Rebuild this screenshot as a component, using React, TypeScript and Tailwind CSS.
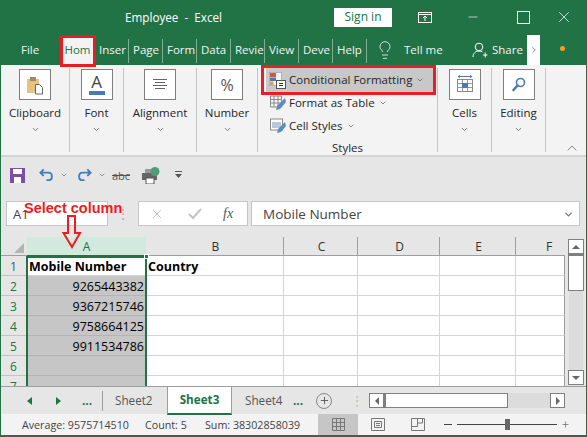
import { ChevronDown, ChevronUp, ChevronRight, Lightbulb, Minus, Plus, X } from "lucide-react";

const font = "font-['Open_Sans','Noto_Sans',sans-serif]";

const tabs = ["Inser", "Page", "Form", "Data", "Revie", "View", "Deve", "Help"];

function TitleBar() {
  return (
    <div className="h-[36px] bg-[#217346] flex items-center text-white shrink-0">
      <span className="ml-[125px] w-[209px] text-[11.700px] whitespace-pre">Employee  -  Excel</span>
      <span className="w-[58px] h-[19px] -mt-[2px] bg-white text-[#217346] text-[12px] flex items-center justify-center">Sign in</span>
      <svg className="ml-[26px] -mt-[2px]" width="14" height="11" viewBox="0 0 14 11" fill="none" stroke="white">
        <rect x="0.5" y="0.5" width="13" height="10" />
        <path d="M0 2.500h14M7 9V4M5 6l2-2 2 2" />
      </svg>
      <Minus className="ml-[34px] -mt-[2px] text-white" size={14} strokeWidth={1.1} />
      <span className="ml-[37px] -mt-[2px] w-[13px] h-[13px] border border-white" />
      <X className="ml-[25px] -mt-[2px]" size={18} strokeWidth={1} />
    </div>
  );
}

function TabRow() {
  return (
    <div className="h-[29px] bg-[#217346] flex items-center text-[#f3f3f3] text-[11.500px] shrink-0 relative">
      <span className="ml-[21px] w-[40px] -mt-[2px]">File</span>
      <span className="w-[33px] h-[29px] bg-[#f3f3f3] text-[#217346] flex items-center justify-center overflow-hidden pb-[2px]">Hom</span>
      <span className="w-[1px]" />
      {tabs.map((t) => (
        <span key={t} className="w-[34px] h-[24px] pl-[4px] pb-[2px] border-r border-[#7fae95] flex items-center overflow-hidden whitespace-nowrap">
          {t}
        </span>
      ))}
      <Lightbulb className="ml-[8px] -mt-[2px]" size={20} strokeWidth={1} />
      <span className="ml-[9px] w-[68px] -mt-[2px]">Tell me</span>
      <svg className="-mt-[2px]" width="16" height="16" viewBox="0 0 16 16" fill="none" stroke="white" strokeWidth="1">
        <circle cx="7" cy="5" r="3.800" />
        <path d="M1 15c0-3.500 2.500-6 6-6 1.500 0 2.500 .4 3.500 1M11 13h4.500M13.200 10.500v5" />
      </svg>
      <span className="ml-[4px] w-[35px] -mt-[2px]">Share</span>
      <span className="w-[13px] h-[30px] -mt-[1px] bg-white flex items-center justify-center">
        <ChevronRight className="text-[#777]" size={10} />
      </span>
      <span className="ml-[20px] -mt-[4px] w-[5px] h-[5px] rounded-full bg-[#f7a01e]" />
    </div>
  );
}

function BigGroup({ label, width, icon }: { label: string; width: string; icon: React.ReactNode }) {
  return (
    <div className={`${width} h-[84px] mt-[3px] border-r border-[#c4c4c4] flex flex-col items-center shrink-0`}>
      <div className="w-[32px] h-[31px] border border-[#7f7f7f] bg-white flex items-center justify-center mt-[1px]">{icon}</div>
      <span className="mt-[4px] text-[11.500px] text-[#262626] leading-[17px]">{label}</span>
      <ChevronDown className="mt-[4px] text-[#555]" size={9} strokeWidth={2} />
    </div>
  );
}

function StyleRow({ label, icon, active }: { label: string; icon: React.ReactNode; active?: boolean }) {
  return (
    <div className={`flex items-center gap-[2px] pl-[3px] text-[11.500px] text-[#262626] whitespace-nowrap shrink-0 ${active ? "h-[24px] -mb-[1px] bg-[#c8c8c8] w-[167px]" : "h-[23px] pl-[4px]"}`}>
      {icon}
      <span className="ml-[1px]">{label}</span>
      <ChevronDown className="ml-[2px] text-[#555]" size={8} strokeWidth={2} />
    </div>
  );
}

function Ribbon() {
  return (
    <div className="h-[92px] bg-[#f3f3f3] border-b-2 border-[#d4d4d4] flex pl-[1px] shrink-0 relative">
      <BigGroup
        label="Clipboard"
        width="w-[69px]"
        icon={
          <svg width="18" height="20" viewBox="0 0 18 20">
            <rect x="1" y="4" width="12" height="14" fill="#e8c27e" />
            <rect x="4" y="2" width="6" height="4" fill="#9a8a70" />
            <path d="M9.500 9.500h4l3 3v6.500h-7z" fill="white" stroke="#666" />
          </svg>
        }
      />
      <BigGroup
        label="Font"
        width="w-[54px]"
        icon={
          <div className="flex flex-col items-center">
            <span className="text-[#444] text-[17px] font-medium leading-[16px]">A</span>
            <span className="w-[16px] h-[4px] mt-[1px] bg-[#4a7cb3]" />
          </div>
        }
      />
      <BigGroup
        label="Alignment"
        width="w-[73px]"
        icon={
          <svg width="14" height="11" viewBox="0 0 14 11" stroke="#666">
            <path d="M0 .5h14M2 3.500h10M0 6.500h14M2 9.500h10" />
          </svg>
        }
      />
      <BigGroup label="Number" width="w-[61px]" icon={<span className="text-[#555] text-[16px] leading-none">%</span>} />

      <div className="w-[180px] h-[84px] mt-[3px] border-r border-[#c4c4c4] flex flex-col pl-[8px] shrink-0">
        <StyleRow
          active
          label="Conditional Formatting"
          icon={
            <svg width="17" height="17" viewBox="0 0 17 17">
              <rect x=".5" y=".5" width="12" height="13" fill="#f4f4f4" stroke="#888" strokeWidth=".5" />
              <rect x="1" y="1" width="6" height="4" fill="#d8563c" />
              <rect x="1" y="5.500" width="6" height="3.500" fill="#4a7cb3" />
              <rect x="1" y="9.500" width="3.500" height="3.500" fill="#e69a52" />
              <rect x="7.500" y="8.500" width="9" height="8" fill="white" stroke="#555" />
              <path d="M10 11.500h4M10 13.500h4" stroke="#333" />
            </svg>
          }
        />
        <StyleRow
          label="Format as Table"
          icon={
            <svg width="16" height="16" viewBox="0 0 16 16" fill="none">
              <path d="M.5 1h11v11h-11zM.5 4.500h11M.5 8h11M4 1v11M8 1v11" stroke="#8a8a8a" />
              <path d="M15 3l-8 8-1 4 4-1 6-7z" fill="#5b8cc0" />
            </svg>
          }
        />
        <StyleRow
          label="Cell Styles"
          icon={
            <svg width="16" height="16" viewBox="0 0 16 16">
              <rect x=".5" y="1" width="12" height="11" fill="white" stroke="#888" />
              <rect x="2" y="4" width="9" height="6" fill="#b9c7d8" />
              <path d="M15 4l-7 7-1 4 4-1 5-6z" fill="#5b8cc0" />
            </svg>
          }
        />
        <span className="text-[11.500px] text-[#262626] text-center leading-[16px] pr-[8px] mt-[3px] shrink-0">Styles</span>
      </div>

      <BigGroup
        label="Cells"
        width="w-[54px]"
        icon={
          <svg width="16" height="19" viewBox="0 0 16 19" fill="none">
            <path d="M1 1.500h14M3 .5L1 1.500l2 1M13 .5l2 1-2 1" stroke="#4a7cb3" />
            <rect x=".5" y="4.500" width="15" height="12" stroke="#888" fill="white" />
            <path d="M.5 8.500h15M.5 12.500h15M5.500 4.500v12M10.500 4.500v12" stroke="#999" />
            <rect x="5" y="8" width="6" height="5" fill="#4a7cb3" />
          </svg>
        }
      />
      <BigGroup
        label="Editing"
        width="w-[54px]"
        icon={
          <svg width="14" height="15" viewBox="0 0 14 15" fill="none" stroke="#4a7cb3">
            <circle cx="8.500" cy="5.500" r="4" strokeWidth="1.600" />
            <path d="M5.500 8.500L1.500 13" strokeWidth="2.600" strokeLinecap="round" />
          </svg>
        }
      />
      <ChevronUp className="absolute left-[564px] -bottom-[1px] text-[#555]" size={16} strokeWidth={1} />
    </div>
  );
}

function QuickAccess() {
  return (
    <div className="h-[40px] bg-[#e6e6e6] flex items-center pl-[10px] pb-[4px] shrink-0 text-[#666]">
      <svg width="15" height="15" viewBox="0 0 15 15">
        <rect width="15" height="15" fill="#7b4fa3" />
        <rect x="3" y="1" width="9" height="5" fill="white" />
        <rect x="4" y="9" width="7" height="6" fill="white" />
      </svg>
      <svg className="ml-[14px]" width="15" height="14" viewBox="0 0 16 14" fill="none" stroke="#3f7fbd" strokeWidth="2">
        <path d="M5 1L1.500 4.500 5 8M2 4.500h8c5 0 5 8 0 8H8" />
      </svg>
      <ChevronDown className="ml-[6px]" size={8} strokeWidth={2} />
      <svg className="ml-[9px]" width="15" height="14" viewBox="0 0 16 14" fill="none" stroke="#3f7fbd" strokeWidth="2">
        <path d="M11 1l3.500 3.500L11 8M14 4.500H6c-5 0-5 8 0 8h2" />
      </svg>
      <ChevronDown className="ml-[6px]" size={8} strokeWidth={2} />
      <span className="ml-[6px] text-[11px] text-[#555] line-through leading-none">abc</span>
      <svg className="ml-[12px]" width="18" height="17" viewBox="0 0 18 17">
        <rect x="0" y="6" width="15" height="7" fill="#666" />
        <rect x="3" y="2" width="8" height="4" fill="#999" />
        <rect x="4" y="11" width="8" height="6" fill="white" stroke="#555" />
        <circle cx="13" cy="4.500" r="4.500" fill="#4f9d7c" />
      </svg>
      <svg className="ml-[15px]" width="7" height="8" viewBox="0 0 7 8" fill="#555">
        <path d="M0 0h7v1H0zM0 3h7L3.500 7z" />
      </svg>
    </div>
  );
}

function FormulaRow() {
  return (
    <div className="h-[40px] bg-[#e6e6e6] flex pl-[6px] pt-[4px] shrink-0">
      <div className="w-[102px] h-[25px] bg-white border border-[#c6c6c6] pl-[6px] text-[13px] text-[#444] leading-[25px]">A1</div>
      <span className="w-[30px] text-[#aaa] text-center text-[12px] leading-[26px]">⋮</span>
      <div className="w-[110px] h-[25px] bg-white border border-[#c6c6c6] flex items-center text-[#b5b5b5]">
        <X className="ml-[11px]" size={14} strokeWidth={1.500} />
        <svg className="ml-[24px]" width="14" height="12" viewBox="0 0 14 12" fill="none" stroke="#c4c4c4" strokeWidth="2">
          <path d="M1 6l4 4 8-9" />
        </svg>
        <span className="ml-[21px] text-[#555] text-[14px] italic font-['Liberation_Serif',serif]">fx</span>
      </div>
      <div className="ml-[3px] w-[329px] h-[25px] bg-white border border-[#c6c6c6] flex items-center justify-between pl-[11px] pr-[5px] pt-[1px] text-[13.500px] text-[#444]">
        <span>Mobile Number</span>
        <ChevronDown className="text-[#777]" size={11} strokeWidth={3} />
      </div>
    </div>
  );
}

const rows = [
  ["Mobile Number", "Country"],
  ["9265443382", ""],
  ["9367215746", ""],
  ["9758664125", ""],
  ["9911534786", ""],
  ["", ""],
  ["", ""],
];

const colHead = "border-r border-[#9e9e9e] text-center text-[12px] text-[#333] h-[19px] leading-[20px] pl-[2px]";
const cell = "h-[20px] border-r border-b border-[#d4d4d4]";

function Sheet() {
  return (
    <div className="h-[149px] bg-[#e6e6e6] flex relative overflow-hidden shrink-0">
      <div className="w-[565px] shrink-0">
        <div className={`grid grid-cols-[27px_119px_138px_74px_82px_76px_49px] ${font}`}>
          <div className="h-[19px] border-b border-[#9e9e9e] relative">
            <span className="absolute right-[3px] bottom-[2px] border-l-[10px] border-b-[10px] border-l-transparent border-b-[#b4b4b4]" />
          </div>
          <div className="bg-[#d2eadd] text-[#217346] text-center text-[12px] h-[19px] leading-[20px] border-b border-[#217346]">A</div>
          {["B", "C", "D", "E"].map((c) => (
            <div key={c} className={`${colHead} border-b border-b-[#9e9e9e]`}>{c}</div>
          ))}
          <div className="text-center text-[12px] text-[#333] h-[19px] leading-[20px] pl-[17px] border-b border-[#9e9e9e]">F</div>
          {rows.map((r, i) => (
            <div key={i} className="contents">
              <div className="h-[20px] bg-[#e6e6e6] border-b border-[#c4c4c4] text-center text-[12px] leading-[22px] text-[#217346]">{i + 1}</div>
              <div className={`h-[20px] border-b text-[12.500px] leading-[21px] text-black px-[2px] ${i === 0 ? "bg-white font-bold border-[#d4d4d4]" : "bg-[#c6c6c6] text-right border-[#b4b4b4]"}`}>
                {r[0]}
              </div>
              <div className={`${cell} bg-white text-[12.500px] leading-[21px] text-black font-bold px-[2px]`}>{r[1]}</div>
              <div className={`${cell} bg-white`} />
              <div className={`${cell} bg-white`} />
              <div className={`${cell} bg-white`} />
              <div className="h-[20px] border-b border-r border-b-[#d4d4d4] border-r-[#9e9e9e] bg-white" />
            </div>
          ))}
        </div>
      </div>
      <div className="ml-[3px] w-[16px] flex flex-col">
        <div className="mt-[2px] h-[15px] bg-white border border-[#7f7f7f] flex items-center justify-center">
          <span className="border-x-[4px] border-b-[4px] border-x-transparent border-b-[#666]" />
        </div>
        <div className="h-[37px] bg-white border border-[#7f7f7f] border-t-2" />
        <div className="flex-1 bg-[#dcdcdc] w-[14px] mx-[1px]" />
        <div className="h-[15px] mb-[1px] bg-white border border-[#7f7f7f] flex items-center justify-center">
          <span className="border-x-[4px] border-t-[4px] border-x-transparent border-t-[#666]" />
        </div>
      </div>
      {/* selection box */}
      <div className="absolute left-[26px] top-[19px] w-[121px] h-[140px] border-2 border-[#217346]" />
      <span className="absolute left-[144px] top-[17px] w-[5px] h-[5px] bg-[#217346] border border-white" />
    </div>
  );
}

function Tabbar() {
  return (
    <div className="h-[28px] bg-[#e6e6e6] border-t border-[#9e9e9e] flex items-center shrink-0 relative text-[11.700px] text-[#555]">
      <span className="ml-[27px] border-y-[4px] border-r-[5px] border-y-transparent border-r-[#217346]" />
      <span className="ml-[24px] border-y-[4px] border-l-[5px] border-y-transparent border-l-[#217346]" />
      <span className="ml-[21px] w-[20px] text-[#217346] font-bold">...</span>
      <span className="h-[20px] border-l border-[#9e9e9e]" />
      <span className="ml-[12px] w-[52px]">Sheet2</span>
      <span className="w-[65px] h-[28px] -mb-[2px] -mt-[1px] bg-white border-b-2 border-[#217346] border-x border-x-[#9e9e9e] text-[#217346] font-bold flex items-center justify-center">Sheet3</span>
      <span className="ml-[13px] w-[48px] whitespace-nowrap">Sheet4</span>
      <span className="w-[20px] text-[#217346] font-bold">...</span>
      <span className="ml-[3px] w-[16px] h-[16px] rounded-full border border-[#888] flex items-center justify-center">
        <Plus size={11} strokeWidth={2} />
      </span>
      <span className="ml-[19px] w-[8px] text-[#bbb]">⋮</span>
      <div className="ml-[10px] w-[196px] h-[15px] flex bg-[#dcdcdc]">
        <span className="w-[15px] bg-white border border-[#7f7f7f] flex items-center justify-center">
          <span className="border-y-[4px] border-r-[4px] border-y-transparent border-r-[#666]" />
        </span>
        <span className="w-[124px] bg-white border border-[#7f7f7f] border-l-2" />
        <span className="ml-auto w-[15px] bg-white border border-[#7f7f7f] flex items-center justify-center">
          <span className="border-y-[4px] border-l-[4px] border-y-transparent border-l-[#666]" />
        </span>
      </div>
    </div>
  );
}

function StatusBar() {
  return (
    <div className="h-[21px] bg-[#f3f3f3] flex items-center text-[10.700px] text-[#444] shrink-0">
      <span className="ml-[22px] w-[123px] whitespace-nowrap pt-[2px]">Average: 9575714510</span>
      <span className="w-[60px] whitespace-nowrap pt-[2px]">Count: 5</span>
      <span className="w-[111px] whitespace-nowrap pt-[2px]">Sum: 38302858039</span>
      <span className="ml-[2px] w-[40px] h-[21px] bg-[#c6c6c6] flex items-center justify-center">
        <svg width="13" height="13" viewBox="0 0 13 13" fill="none" stroke="#777">
          <path d="M.5.5h12v12H.5zM.5 4.500h12M.5 8.500h12M4.500.5v12M8.500.5v12" />
        </svg>
      </span>
      <svg className="ml-[13px]" width="14" height="13" viewBox="0 0 14 13" fill="none" stroke="#777">
        <path d="M.5.5h13v12H.5zM3.500 3.500h7v6h-7zM5 5.500h4M5 7.500h4" />
      </svg>
      <svg className="ml-[26px]" width="14" height="13" viewBox="0 0 14 13" fill="none" stroke="#777">
        <path d="M.5.5h13v12H.5zM.5 8.500h6V.5M6.500 5h5V.5" />
      </svg>
      <span className="ml-[19px] w-[8px] border-t border-[#444]" />
      <span className="ml-[5px] w-[100px] border-t border-[#444] relative">
        <span className="absolute left-[48px] -top-[6px] w-[5px] h-[11px] bg-[#666]" />
      </span>
      <Plus className="ml-[4px]" size={9} strokeWidth={1.500} />
    </div>
  );
}

export default function App() {
  return (
    <div className={`w-[587px] h-[437px] relative overflow-hidden bg-white border-x border-b-2 border-[#217346] ${font}`}>
      <div className="flex flex-col -mx-px">
        <TitleBar />
        <TabRow />
        <Ribbon />
        <QuickAccess />
        <FormulaRow />
        <Sheet />
        <Tabbar />
        <StatusBar />
      </div>

      {/* annotations on top of the shot */}
      <div className="absolute left-[59px] top-[35px] w-[36px] h-[32px] border-[3px] border-[#ed1c24]" />
      <div className="absolute left-[260px] top-[65px] w-[175px] h-[30px] border-[3px] border-[#ed1c24]" />
      <span className="absolute left-[23px] top-[200px] text-[14.500px] leading-[16px] font-bold text-[#ed1c24] font-['Liberation_Sans',sans-serif]">Select column</span>
      <svg className="absolute left-[61px] top-[215px]" width="20" height="34" viewBox="0 0 20 34" fill="none" stroke="#ed1c24" strokeWidth="2">
        <path d="M6 1h7v17h5L10 32 1.500 18H6z" />
      </svg>
    </div>
  );
}
